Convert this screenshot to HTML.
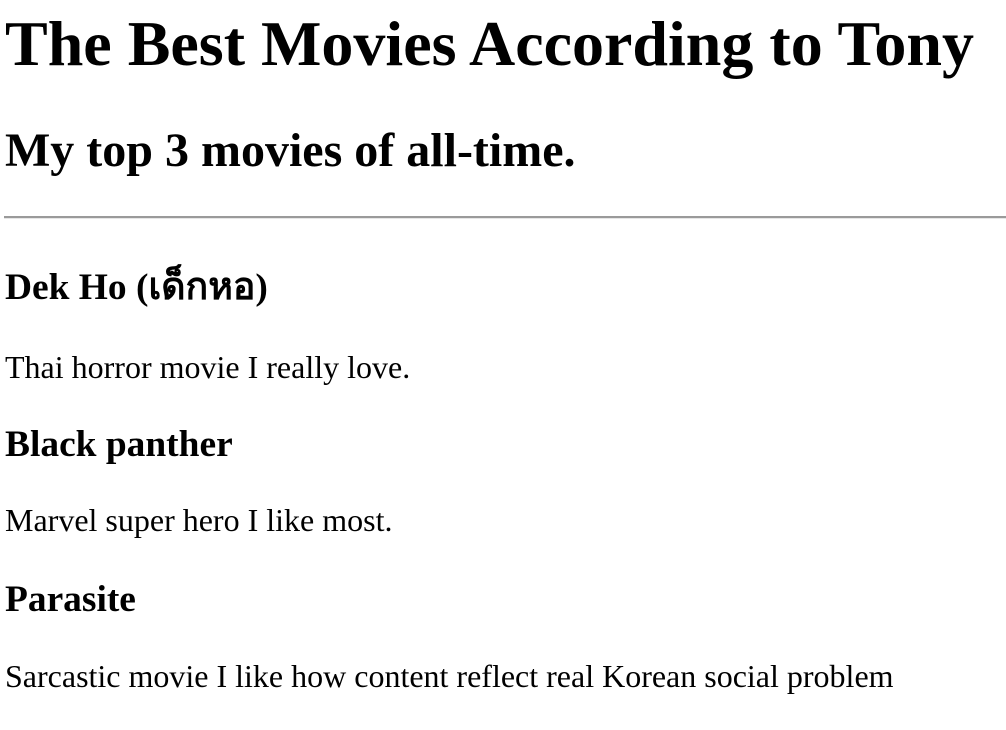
<!DOCTYPE html>
<html><head><meta charset="utf-8"><style>
html,body{margin:0;padding:0;background:#fff;width:1006px;height:730px;overflow:hidden}
body{font-family:"Liberation Serif","DejaVu Serif",serif;color:#000}
.t{position:absolute;left:5px;margin:0;line-height:1;white-space:nowrap}
h1.t{font-size:64px;font-weight:bold}
h2.t{font-size:48px;font-weight:bold}
h3.t{font-size:37.44px;font-weight:bold}
p.t{font-size:32px}
hr{position:absolute;left:4px;width:1002px;top:216px;margin:0;border:0;border-top:2px solid #9a9a9a;border-bottom:1px solid #e6e6e6;height:0}
</style></head><body>
<h1 class="t" style="top:12px">The Best Movies According to Tony</h1>
<h2 class="t" style="top:127px">My top 3 movies of all-time.</h2>
<hr>
<h3 class="t" style="top:269px">Dek Ho (เด็กหอ)</h3>
<p class="t" style="top:351px">Thai horror movie I really love.</p>
<h3 class="t" style="top:426px">Black panther</h3>
<p class="t" style="top:504px">Marvel super hero I like most.</p>
<h3 class="t" style="top:581px">Parasite</h3>
<p class="t" style="top:660px">Sarcastic movie I like how content reflect real Korean social problem</p>
</body></html>
